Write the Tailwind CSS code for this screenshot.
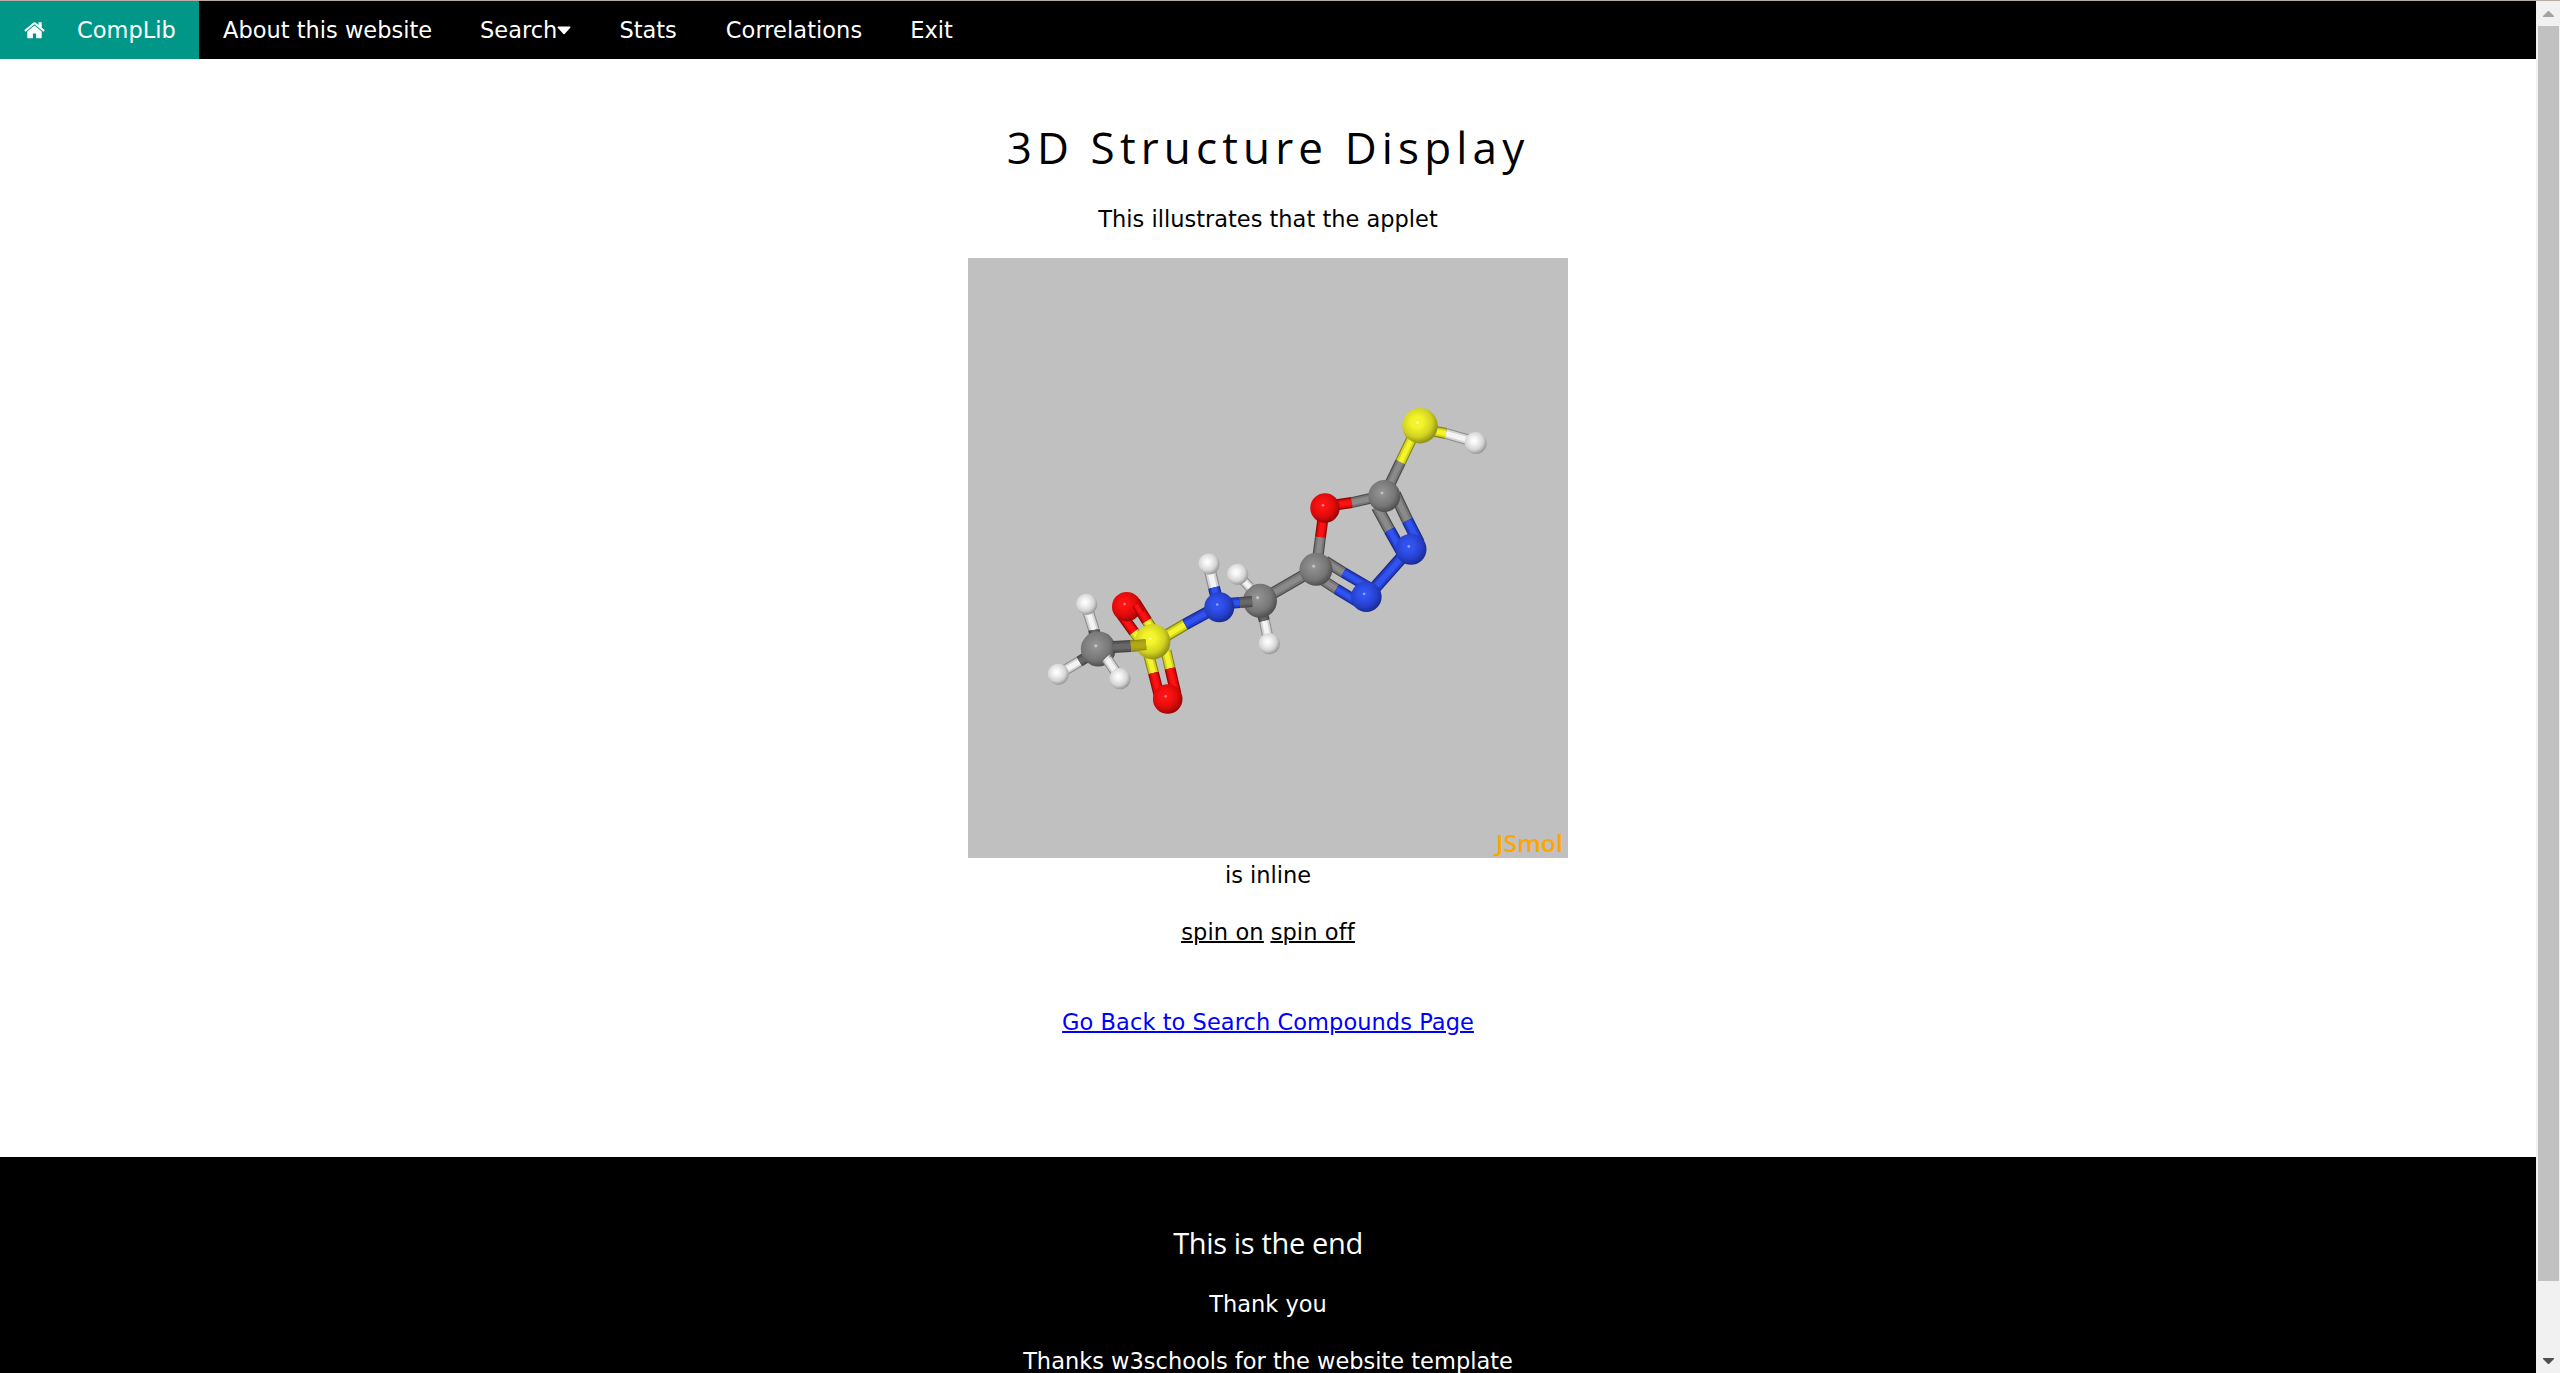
<!DOCTYPE html>
<html lang="en">
<head>
<meta charset="utf-8">
<title>CompLib</title>
<script src="https://cdn.jsdelivr.net/npm/@tailwindcss/browser@4"></script>
</head>
<body class="flex h-[1373px] w-[2560px] flex-col overflow-hidden border-t border-[#b9aaa4] bg-white font-['DejaVu_Sans',sans-serif] text-[22.5px] leading-[34px] text-black">
<div class="flex min-h-0 flex-1">
  <div class="flex w-[2536px] flex-col overflow-hidden">
    <nav class="flex h-[58px] shrink-0 items-center bg-black text-white">
      <a class="flex h-full w-[199px] items-center bg-[#009688] pl-6">
        <svg class="mr-[32px] h-[22.5px] w-[21px]" viewBox="64 0 1664 1792" fill="currentColor"><path d="M1472 992v480q0 26-19 45t-45 19h-384v-384h-256v384h-384q-26 0-45-19t-19-45v-480q0-1 .5-3t.5-3l575-474 575 474q1 2 1 6zm223-69l-62 74q-8 9-21 11h-3q-13 0-21-7l-692-577-692 577q-12 8-24 7-13-2-21-11l-62-74q-8-10-7-23.5t11-21.5l719-599q32-26 76-26t76 26l244 204v-195q0-14 9-23t23-9h192q14 0 23 9t9 23v408l219 182q10 8 11 21.5t-7 23.5z"/></svg>
        <span>CompLib</span>
      </a>
      <a class="px-6">About this website</a>
      <a class="flex items-center px-6">Search<svg class="h-[9px] w-[14px]" viewBox="0 0 13.5 9" fill="currentColor"><path d="M.9.4h11.9q.8.3.4 1L7.4 8q-.6.6-1.2 0L.3 1.4q-.3-.7.6-1z"/></svg></a>
      <a class="px-6">Stats</a>
      <a class="pl-[25px] pr-6 tracking-[0.05px]">Correlations</a>
      <a class="px-6">Exit</a>
    </nav>
    <main class="flex h-[1098px] shrink-0 flex-col items-center">
      <h1 class="mt-[54px] font-['Open_Sans',sans-serif] text-[44px] leading-[68px] tracking-[5.15px]">3D Structure Display</h1>
      <p class="mt-[21px]">This illustrates that the applet</p>
      <svg id="mol" class="mt-[22px] h-[600px] w-[600px] shrink-0 bg-[#c0c0c0]" viewBox="0 0 600 600"></svg>
      <p>is inline</p>
      <p class="mt-[23px] flex gap-[7px] tracking-[0.1px] underline decoration-2"><a>spin on</a><a>spin off</a></p>
      <a class="mt-14 tracking-[0.06px] text-[#0000ff] underline decoration-2">Go Back to Search Compounds Page</a>
    </main>
    <footer class="flex h-[240px] shrink-0 flex-col items-center bg-black text-white">
      <h4 class="mt-[63px] font-['Open_Sans',sans-serif] text-[29px] leading-[45px] tracking-[-0.35px]">This is the end</h4>
      <p class="mt-[22px]">Thank you</p>
      <p class="mt-[23px] whitespace-nowrap">Thanks w3schools for the website template</p>
    </footer>
  </div>
  <div class="flex w-6 flex-col items-center bg-[#f1f1f1]">
    <svg class="mt-[10px] h-[6px] w-[11px]" viewBox="0 0 11 6" fill="#a3a3a3"><path d="M0 6V5L5 0h1l5 5v1z"/></svg>
    <div class="mt-[9px] h-[1255px] w-[21px] bg-[#c1c1c1]"></div>
    <svg class="mt-[77px] h-[6px] w-[11px]" viewBox="0 0 11 6" fill="#505050"><path d="M0 0v1l5 5h1l5-5V0z"/></svg>
  </div>
</div>
<script>
// Shades per element: highlight, base, shadow
const C = {
  H: ['#f4f4f4', '#d4d4d4', '#8c8c8c'],
  C: ['#8a8a8a', '#767676', '#484848'],
  D: ['#686868', '#585858', '#444444'],
  S: ['#f4f42a', '#d2d222', '#848414'],
  T: ['#b0a818', '#a8a014', '#8c8810'],
  O: ['#fc1212', '#dc0a0a', '#8c0404'],
  N: ['#3052ee', '#2640cc', '#172888']
};
let out = '<defs>';
for (const k of 'HCSON') {
  const [l, b, d] = C[k];
  out += `<radialGradient id="g${k}" cx=".42" cy=".4" r=".64"><stop offset="0" stop-color="${k === 'H' ? '#fff' : k === 'C' ? '#969696' : l}"/><stop offset=".25" stop-color="${l}"/><stop offset=".65" stop-color="${b}"/><stop offset="1" stop-color="${d}"/></radialGradient>`;
}
out += '</defs>';
// Bond: points run through alternating coloured segments
const bond = (w, ...a) => {
  for (let i = 0; i + 3 < a.length; i += 3) {
    const [x1, y1, k, x2, y2] = a.slice(i, i + 5);
    [[1, 2], [.8, 1], [.45, 0]].forEach(([f, s]) => {
      out += `<line x1="${x1}" y1="${y1}" x2="${x2}" y2="${y2}" stroke="${C[k][s]}" stroke-width="${w * f}"/>`;
    });
  }
};
const atom = (k, x, y, r) => {
  out += `<circle cx="${x}" cy="${y}" r="${r}" fill="url(#g${k})"/>`;
  out += `<circle cx="${x - r * .14}" cy="${y - r * .18}" r="${r * .09}" fill="#fff" opacity=".45"/>`;
};
// Sulfonyl side
bond(11.5, 119, 350, 'H', 126, 372, 'D', 128, 385);
bond(11, 92, 415, 'H', 111.5, 403.5, 'D', 122, 397);
atom('C', 130.3, 391, 17.5);
bond(11, 152, 420, 'H', 139, 401, 'H', 138, 400);
bond(12, 145, 389, 'D', 163, 388, 'T', 184, 386);
bond(11, 153, 356, 'O', 166, 374, 'S', 172, 382);
bond(11, 167, 344, 'O', 179, 363, 'S', 186, 374);
bond(11, 181, 398, 'S', 185.5, 415, 'O', 191, 437);
bond(11, 198, 393, 'S', 202, 410.5, 'O', 208, 436);
bond(12, 196, 379, 'S', 217, 366.5, 'N', 240, 354);
atom('S', 184.7, 383.7, 17.7);
bond(11, 163, 388, 'T', 178, 386.5);
atom('O', 158.7, 348.7, 14.7);
bond(8, 168, 347, 'O', 173, 355);
atom('O', 199.7, 441, 14.8);
bond(12, 242, 313, 'H', 246, 329.5, 'N', 249, 342);
bond(11, 294, 355, 'D', 296.5, 363, 'H', 300, 380);
bond(12, 300, 338, 'C', 340, 315);
atom('C', 292, 342.7, 17);
bond(10, 271, 318, 'H', 282, 329.5);
bond(11, 260, 345.5, 'N', 272, 344.5, 'D', 284, 343.5);
atom('N', 251.3, 349.3, 15);
for (const h of [[118.7, 346.3], [90.3, 416.3], [152, 420.7], [241, 306], [269.7, 316.3], [301.3, 385.7]]) atom('H', ...h, 10.6);
// Ring side
bond(11, 421, 228, 'C', 432.5, 204, 'S', 445, 178);
bond(11, 460, 172, 'S', 478, 175.5, 'H', 504, 183);
bond(11, 367, 247, 'O', 384, 244.5, 'C', 404, 240);
bond(11, 350, 298, 'C', 352.5, 279, 'O', 355, 260);
bond(12, 409, 249, 'C', 421.5, 272, 'N', 435, 296);
bond(12, 427, 236, 'C', 439.5, 262.5, 'N', 451, 285);
bond(11, 357, 303, 'C', 375.5, 314.5, 'N', 402, 330);
bond(11, 353, 321, 'C', 368.5, 331, 'N', 390, 344);
bond(12.5, 436, 297, 'N', 404, 333);
atom('C', 416.3, 238, 16);
atom('C', 348, 311.3, 16.5);
atom('O', 357, 250, 14.7);
atom('N', 443, 291.3, 15.5);
atom('N', 398.3, 338.7, 15.3);
atom('S', 452, 167.7, 17.7);
atom('H', 507.7, 185, 11);
out += '<text x="528" y="594" textLength="67" lengthAdjust="spacingAndGlyphs" font-family="Open Sans, sans-serif" font-size="24" font-weight="600" fill="#ffa500">JSmol</text>';
document.getElementById('mol').innerHTML = out;
</script>
</body>
</html>
